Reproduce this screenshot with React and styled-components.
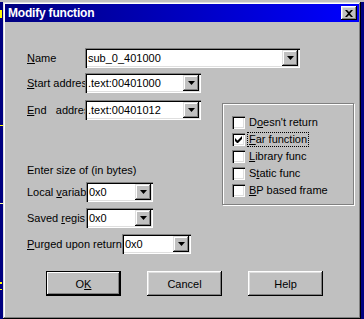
import React from 'react';
import styled, { createGlobalStyle } from 'styled-components';

const GlobalStyle = createGlobalStyle`
  html, body {
    margin: 0;
    padding: 0;
    width: 364px;
    height: 319px;
    overflow: hidden;
  }
  body {
    font-family: "Liberation Sans", Arial, sans-serif;
    font-size: 11px;
    color: #000;
    background:
      linear-gradient(#ffff00, #ffff00) 0 10px / 2px 8px no-repeat,
      linear-gradient(#ffff00, #ffff00) 0 125px / 3px 1px no-repeat,
      linear-gradient(#ffffa0, #ffffa0) 0 203px / 3px 1px no-repeat,
      linear-gradient(#ffff00, #ffff00) 0 282px / 2px 2px no-repeat,
      linear-gradient(#ffff00, #ffff00) 0 289px / 2px 1px no-repeat,
      linear-gradient(#c0c0c0 0 2px, #000080 2px);
  }
`;

const Page = styled.div`
  padding: 2px 0 0 3px;
`;

const Window = styled.div`
  width: 358px;
  height: 317px;
  box-sizing: border-box;
  padding: 2px;
  background: #c0c0c0;
  box-shadow: inset -1px -1px #000, inset 1px 1px #dfdfdf,
    inset -2px -2px #808080, inset 2px 2px #fff;
`;

const TitleBar = styled.div`
  height: 18px;
  display: flex;
  align-items: center;
  justify-content: space-between;
  padding: 0 2px 0 3px;
  background: linear-gradient(90deg, #000080 0%, #0000ff 100%);
  color: #fff;
  font-weight: bold;
  font-size: 12px;
  letter-spacing: -0.2px;
`;

const CloseButton = styled.div`
  width: 16px;
  height: 14px;
  display: flex;
  align-items: center;
  justify-content: center;
  background: #c0c0c0;
  box-shadow: inset -1px -1px #000, inset 1px 1px #fff,
    inset -2px -2px #808080, inset 2px 2px #dfdfdf;
`;

const Content = styled.div`
  padding: 26px 0 0 22px;
`;

const Row = styled.div`
  display: flex;
  align-items: center;
  height: 20px;
  margin-top: ${(p) => p.$top || 0}px;
`;

const Label = styled.div`
  width: ${(p) => p.$width}px;
  flex-shrink: 0;
  overflow: hidden;
  white-space: pre;
  line-height: 13px;
`;

const Combo = styled.div`
  width: ${(p) => p.$width}px;
  height: 20px;
  box-sizing: border-box;
  padding: 2px;
  display: flex;
  background: #fff;
  box-shadow: inset 1px 1px #808080, inset 2px 2px #000,
    inset -1px -1px #fff, inset -2px -2px #dfdfdf;
`;

const ComboText = styled.div`
  flex: 1;
  padding-left: 1px;
  line-height: 16px;
  white-space: nowrap;
  overflow: hidden;
`;

const ArrowButton = styled.div`
  width: 16px;
  height: 16px;
  flex-shrink: 0;
  display: flex;
  align-items: center;
  justify-content: center;
  background: #c0c0c0;
  box-shadow: inset -1px -1px #000, inset 1px 1px #dfdfdf,
    inset -2px -2px #808080, inset 2px 2px #fff;
`;

const Columns = styled.div`
  display: flex;
  margin-top: 5px;
`;

const LeftColumn = styled.div`
  width: 174px;
  display: flex;
  flex-direction: column;
`;

const Caption = styled.div`
  margin-top: 44px;
  line-height: 13px;
`;

const GroupBox = styled.div`
  margin: 30px 0 0 21px;
  width: 132px;
  height: 102px;
  box-sizing: border-box;
  padding: 12px 0 0 9px;
  border: 1px solid #808080;
  box-shadow: inset 1px 1px #fff, 1px 1px #fff;
`;

const CheckRow = styled.div`
  display: flex;
  align-items: center;
  height: 13px;
  margin-bottom: 4px;
`;

const CheckBox = styled.div`
  width: 13px;
  height: 13px;
  box-sizing: border-box;
  display: flex;
  align-items: center;
  justify-content: center;
  background: #fff;
  box-shadow: inset 1px 1px #808080, inset 2px 2px #000,
    inset -1px -1px #fff, inset -2px -2px #dfdfdf;
`;

const CheckLabel = styled.span`
  margin-left: ${(p) => (p.$focused ? 3 : 4)}px;
  padding: 0 ${(p) => (p.$focused ? 1 : 0)}px;
  line-height: 13px;
  outline: ${(p) => (p.$focused ? '1px dotted #000' : 'none')};
`;

const U = styled.span`
  text-decoration: underline;
`;

const ButtonRow = styled.div`
  display: flex;
  gap: 26px;
  margin: 17px 0 0 19px;
`;

const Button = styled.div`
  width: 75px;
  height: 25px;
  box-sizing: border-box;
  display: flex;
  align-items: center;
  justify-content: center;
  background: #c0c0c0;
  box-shadow: ${(p) =>
    p.$default
      ? 'inset 0 0 0 1px #000, inset -2px -2px #000, inset 2px 2px #fff, inset -3px -3px #808080'
      : 'inset -1px -1px #000, inset 1px 1px #fff, inset -2px -2px #808080, inset 2px 2px #dfdfdf'};
`;

function Arrow() {
  return (
    <svg width="7" height="4" viewBox="0 0 7 4">
      <path d="M0 0h7L3.5 4z" fill="#000" />
    </svg>
  );
}

function ComboBox({ width, value }) {
  return (
    <Combo $width={width}>
      <ComboText>{value}</ComboText>
      <ArrowButton>
        <Arrow />
      </ArrowButton>
    </Combo>
  );
}

function Check({ checked, focused, children }) {
  return (
    <CheckRow>
      <CheckBox>
        {checked && (
          <svg width="7" height="7" viewBox="0 0 7 7">
            <path d="M0 2v3l2 2h1l4-4V0L2.5 4.5z" fill="#000" />
          </svg>
        )}
      </CheckBox>
      <CheckLabel $focused={focused}>{children}</CheckLabel>
    </CheckRow>
  );
}

export default function App() {
  return (
    <Page>
      <GlobalStyle />
      <Window>
        <TitleBar>
          <span>Modify function</span>
          <CloseButton>
            <svg width="8" height="7" viewBox="0 0 8 7">
              <path
                d="M0 0h2l2 2 2-2h2L5 3.5 8 7H6L4 5 2 7H0l3-3.5z"
                fill="#000"
              />
            </svg>
          </CloseButton>
        </TitleBar>
        <Content>
          <Row>
            <Label $width={58}>
              <U>N</U>ame
            </Label>
            <ComboBox width={215} value="sub_0_401000" />
          </Row>
          <Columns>
            <LeftColumn>
              <Row>
                <Label $width={58}>
                  <U>S</U>tart addres
                </Label>
                <ComboBox width={116} value=".text:00401000" />
              </Row>
              <Row $top={7}>
                <Label $width={58}>
                  <U>E</U>nd{'   '}addres
                </Label>
                <ComboBox width={116} value=".text:00401012" />
              </Row>
              <Caption>Enter size of (in bytes)</Caption>
              <Row $top={5}>
                <Label $width={59}>
                  Local <U>v</U>ariab
                </Label>
                <ComboBox width={67} value="0x0" />
              </Row>
              <Row $top={6}>
                <Label $width={59}>
                  Saved <U>r</U>egis
                </Label>
                <ComboBox width={67} value="0x0" />
              </Row>
              <Row $top={6}>
                <Label $width={95}>
                  <U>P</U>urged upon return
                </Label>
                <ComboBox width={69} value="0x0" />
              </Row>
            </LeftColumn>
            <GroupBox>
              <Check>
                D<U>o</U>esn't return
              </Check>
              <Check checked focused>
                <U>F</U>ar function
              </Check>
              <Check>
                <U>L</U>ibrary func
              </Check>
              <Check>
                S<U>t</U>atic func
              </Check>
              <Check>
                <U>B</U>P based frame
              </Check>
            </GroupBox>
          </Columns>
          <ButtonRow>
            <Button $default>
              <span>
                O<U>K</U>
              </span>
            </Button>
            <Button>Cancel</Button>
            <Button>Help</Button>
          </ButtonRow>
        </Content>
      </Window>
    </Page>
  );
}
